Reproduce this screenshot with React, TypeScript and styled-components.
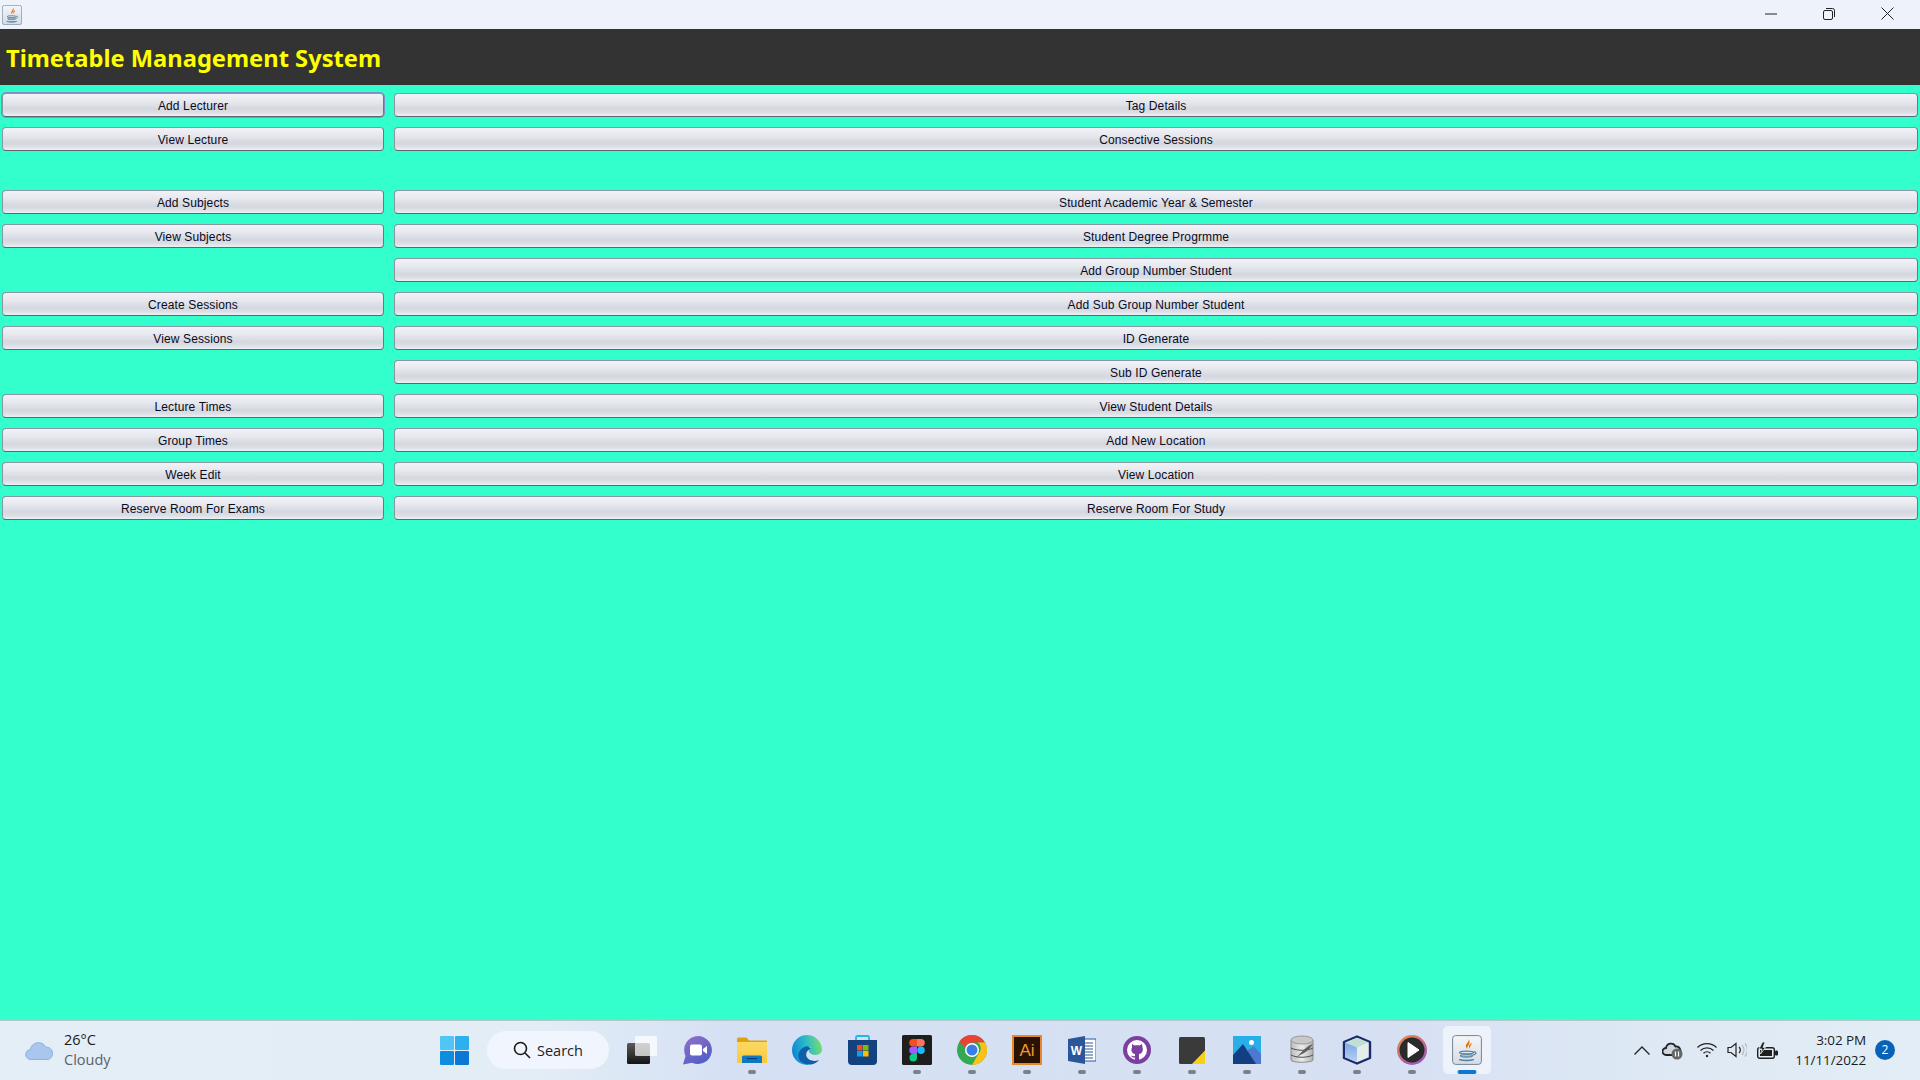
import React from 'react';
import styled, { createGlobalStyle } from 'styled-components';

const GlobalStyle = createGlobalStyle`
  html, body { margin: 0; padding: 0; height: 100%; overflow: hidden; }
  #root { height: 100%; }
`;

const Screen = styled.div`
  width: 1920px;
  height: 1080px;
  display: flex;
  flex-direction: column;
  background: #33ffcc;
  font-family: "Liberation Sans", Arial, sans-serif;
`;

const TitleBar = styled.div`
  height: 29px;
  flex: none;
  display: flex;
  align-items: center;
  justify-content: space-between;
  background: #eef3fb;
  padding: 0 3px 0 2px;
`;

const WindowControls = styled.div`
  display: flex;
  height: 100%;
`;

const WindowControl = styled.div`
  width: 58.5px;
  height: 100%;
  padding-bottom: 2px;
  box-sizing: border-box;
  display: flex;
  align-items: center;
  justify-content: center;
`;

const Header = styled.header`
  height: 56px;
  flex: none;
  box-sizing: border-box;
  display: flex;
  align-items: center;
  background: #333333;
  padding: 1px 0 0 6px;
`;

const HeaderTitle = styled.h1`
  margin: 0;
  font: 700 23.7px "Noto Sans", sans-serif;
  color: #ffff00;
`;

const Board = styled.main`
  flex: 1;
  display: grid;
  grid-template-columns: 382px 1fr;
  grid-auto-rows: max-content;
  column-gap: 10px;
  row-gap: 10px;
  padding: 8px 2px 0;
`;

const Spacer = styled.div`
  grid-column: 1 / -1;
  height: 19px;
`;

const ActionButton = styled.button<{ $focused?: boolean }>`
  height: 24px;
  padding: 2px 0 0;
  border: 1px solid #8b96a3;
  border-bottom-color: #5f6670;
  border-right-color: #6f7782;
  border-radius: 4px;
  background: linear-gradient(#f1f3f8 0%, #e6e8ee 35%, #d4d7de 68%, #dcdfe6 85%, #eef0f5 100%);
  font: 12px "Liberation Sans", Arial, sans-serif;
  letter-spacing: 0.12px;
  color: #0a0a1e;
  box-shadow: ${p => (p.$focused ? '0 0 0 1px #7f8fc8' : 'none')};
`;

const Taskbar = styled.footer`
  height: 60px;
  flex: none;
  display: flex;
  align-items: center;
  border-top: 1px solid #b7c6c9;
  padding-bottom: 1px;
  box-sizing: border-box;
  background: linear-gradient(90deg, #e3eef7 0%, #e2edf6 28%, #d6e0f4 38%, #d7e0f3 72%, #dde8f4 85%, #e2edf6 100%);
`;

const Weather = styled.div`
  width: 430px;
  flex: none;
  display: flex;
  align-items: center;
  gap: 9px;
  padding-left: 25px;
  box-sizing: border-box;
`;

const WeatherText = styled.div`
  font: 14.5px/20px "Open Sans", sans-serif;
  color: #1c1c1c;
`;

const WeatherNote = styled.div`
  color: #5c6168;
`;

const TaskIcons = styled.div`
  display: flex;
  align-items: center;
`;

const TaskIcon = styled.div<{ $active?: boolean }>`
  position: relative;
  width: 48px;
  height: 48px;
  margin-right: 7px;
  display: flex;
  align-items: center;
  justify-content: center;
  border-radius: 5px;
  background: ${p => (p.$active ? '#eef3fb' : 'transparent')};
`;

const RunDot = styled.span<{ $active?: boolean }>`
  position: absolute;
  bottom: 0;
  left: 50%;
  transform: translateX(-50%);
  width: ${p => (p.$active ? '19px' : '8px')};
  height: 4px;
  border-radius: 2px;
  background: ${p => (p.$active ? '#0a78d4' : '#7b8089')};
`;

const SearchBox = styled.div`
  width: 122px;
  height: 38px;
  margin: 0 9px 0 2px;
  box-sizing: border-box;
  display: flex;
  align-items: center;
  justify-content: center;
  gap: 6px;
  border-radius: 19px;
  background: #f1f5fd;
  font: 14.5px "Open Sans", sans-serif;
  color: #222;
`;

const Tray = styled.div`
  margin-left: auto;
  display: flex;
  align-items: center;
  padding-right: 25px;
`;

const TrayIcon = styled.div<{ $w: number }>`
  width: ${p => p.$w}px;
  display: flex;
  justify-content: center;
`;

const Clock = styled.div`
  width: 79px;
  text-align: right;
  font: 13.5px/20px "Open Sans", sans-serif;
  letter-spacing: -0.1px;
  color: #1c1c1c;
`;

const Badge = styled.div`
  width: 20px;
  height: 20px;
  margin-left: 9px;
  border-radius: 50%;
  background: #0a62b8;
  color: #fff;
  font: 12px/20px "Open Sans", sans-serif;
  text-align: center;
`;

const JavaIcon = ({ size, id }: { size: number; id: string }) => (
  <svg width={size} height={size} viewBox="0 0 30 30">
    <defs>
      <linearGradient id={id} x1="0" y1="0" x2="0" y2="1">
        <stop offset="0" stopColor="#f4f6f9" />
        <stop offset="1" stopColor="#d5dce4" />
      </linearGradient>
    </defs>
    <rect x="0.6" y="0.6" width="28.8" height="28.8" rx="3" fill={`url(#${id})`} stroke="#71859a" />
    <path d="M16.5 3c2 3.500-3.500 5.500-2.500 9 .3 1 1 1.800 1.500 2.500-1.800-3.500 4.500-5 1-11.500z" fill="#e76f00" />
    <path d="M20 8c-3.500 1.500-3.500 3.500-2.500 6-.2-2 1.500-3.500 2.500-6z" fill="#e76f00" />
    <ellipse cx="14.5" cy="17.5" rx="7" ry="1.400" fill="none" stroke="#5382a1" strokeWidth="1.300" />
    <ellipse cx="14.5" cy="20.8" rx="6" ry="1.200" fill="none" stroke="#5382a1" strokeWidth="1.300" />
    <path d="M7 24.500c4 1.800 11 1.800 15 0-3 .8-12 .8-15 0z" fill="#5382a1" stroke="#5382a1" />
    <path d="M21.500 17c3.500-.8 3.500 2.500-1 3.200" fill="none" stroke="#5382a1" strokeWidth="1.100" />
  </svg>
);

const StartIcon = () => (
  <svg width="29" height="29" viewBox="0 0 29 29">
    <rect x="0" y="0" width="14" height="14" rx="1" fill="#4fc6f5" />
    <rect x="15" y="0" width="14" height="14" rx="1" fill="#2fb0ee" />
    <rect x="0" y="15" width="14" height="14" rx="1" fill="#0f8ee0" />
    <rect x="15" y="15" width="14" height="14" rx="1" fill="#0a78d4" />
  </svg>
);

const TaskViewIcon = () => (
  <svg width="30" height="28" viewBox="0 0 30 28">
    <defs>
      <linearGradient id="tv" x1="0" y1="0" x2="0" y2="1">
        <stop offset="0" stopColor="#5a5a5a" />
        <stop offset="1" stopColor="#141414" />
      </linearGradient>
    </defs>
    <rect x="0" y="7" width="23" height="21" rx="1.5" fill="url(#tv)" />
    <rect x="8" y="0" width="22" height="20" rx="1.5" fill="#ffffff" opacity="0.72" />
  </svg>
);

const ChatIcon = () => (
  <svg width="30" height="30" viewBox="0 0 30 30">
    <defs>
      <linearGradient id="ch" x1="0.2" y1="0" x2="0.8" y2="1">
        <stop offset="0" stopColor="#8f6fc8" />
        <stop offset="1" stopColor="#4d5cc6" />
      </linearGradient>
    </defs>
    <path d="M16 1a14 14 0 1 1-6 26.700L1 29.500 3.500 21A14 14 0 0 1 16 1z" fill="url(#ch)" />
    <rect x="8" y="9.500" width="12" height="11" rx="2" fill="#fff" />
    <path d="M21 14l4-3v8l-4-3z" fill="#fff" />
  </svg>
);

const FolderIcon = () => (
  <svg width="30" height="26" viewBox="0 0 30 26">
    <defs>
      <linearGradient id="fo" x1="0" y1="0" x2="0" y2="1">
        <stop offset="0" stopColor="#fbd964" />
        <stop offset="1" stopColor="#fcc83a" />
      </linearGradient>
    </defs>
    <path d="M0 2a1.500 1.500 0 0 1 1.500-1.500h8L12 3.500h18V26H0z" fill="#dea20e" />
    <rect x="0" y="5" width="30" height="21" fill="url(#fo)" />
    <path d="M5 20a1.500 1.500 0 0 1 1.500-1.500h17a1.500 1.500 0 0 1 1.500 1.500v6H5z" fill="#0f78c6" />
    <rect x="10" y="21" width="10" height="1.200" fill="#083f6e" />
  </svg>
);

const EdgeIcon = () => (
  <svg width="30" height="30" viewBox="0 0 30 30">
    <defs>
      <linearGradient id="eg" x1="0" y1="0.5" x2="1" y2="0.3">
        <stop offset="0" stopColor="#0f86d6" />
        <stop offset="0.5" stopColor="#2cbcc8" />
        <stop offset="1" stopColor="#7ade6a" />
      </linearGradient>
    </defs>
    <circle cx="15" cy="15" r="15" fill="url(#eg)" />
    <path d="M30 16C28 21 20 21 17.500 17.500 16 15 17 13 19 12.500 15 11 9 13 9 20c0 5 4 8.500 8 10 6 0 10-3 13-8z" fill="#d7e0f3" />
    <path d="M14 11.500C8 13 5 19 7 24c2 4 7 6 12 5.500 3-.3 6-2 8-4.500-5 2-11 .5-12.500-3.500-1-3.500 1-6.500 4-8-1.500-1.500-3-2.500-4.500-2z" fill="#0c5fa8" />
  </svg>
);

const StoreIcon = () => (
  <svg width="29" height="30" viewBox="0 0 29 30">
    <path d="M8 5V2.500A1.500 1.500 0 0 1 9.500 1h10A1.500 1.500 0 0 1 21 2.500V5" fill="none" stroke="#29b2f0" strokeWidth="1.800" />
    <path d="M0 5h29v21a4 4 0 0 1-4 4H4a4 4 0 0 1-4-4z" fill="#14427e" />
    <rect x="9" y="10" width="5.500" height="5.500" fill="#f25022" />
    <rect x="15" y="10" width="5.500" height="5.500" fill="#7fba00" />
    <rect x="9" y="16" width="5.500" height="5.500" fill="#00a4ef" />
    <rect x="15" y="16" width="5.500" height="5.500" fill="#ffb900" />
  </svg>
);

const FigmaIcon = () => (
  <svg width="30" height="30" viewBox="0 0 30 30">
    <rect width="30" height="30" rx="1.500" fill="#1e1e1e" />
    <path d="M11 4h4v7.500h-4a3.750 3.750 0 0 1 0-7.500z" fill="#f24e1e" />
    <path d="M15 4h4a3.750 3.750 0 0 1 0 7.500h-4z" fill="#ff7262" />
    <path d="M11 11.500h4V19h-4a3.750 3.750 0 0 1 0-7.500z" fill="#a259ff" />
    <circle cx="19" cy="15.250" r="3.750" fill="#1abcfe" />
    <path d="M11 19h4v3.750a3.750 3.750 0 1 1-4-3.750z" fill="#0acf83" />
  </svg>
);

const ChromeIcon = () => (
  <svg width="30" height="30" viewBox="0 0 30 30">
    <circle cx="15" cy="15" r="15" fill="#34a853" />
    <path d="M15 0a15 15 0 0 1 13 7.500H15a7.500 7.500 0 0 0-7 5L2.500 6.500A15 15 0 0 1 15 0z" fill="#ea4335" />
    <path d="M28 7.500A15 15 0 0 1 15 30l6.500-11.300A7.500 7.500 0 0 0 21 7.500z" fill="#fbc116" />
    <circle cx="15" cy="15" r="7" fill="#fff" />
    <circle cx="15" cy="15" r="5.500" fill="#3b7de8" />
  </svg>
);

const IllustratorIcon = () => (
  <svg width="30" height="30" viewBox="0 0 30 30">
    <rect x="1" y="1" width="28" height="28" fill="#2a1200" stroke="#e8862a" strokeWidth="2" />
    <text x="15" y="21" textAnchor="middle" fontFamily="Liberation Sans" fontSize="17" fill="#f29a2e">Ai</text>
  </svg>
);

const WordIcon = () => (
  <svg width="28" height="28" viewBox="0 0 28 28">
    <rect x="13" y="3" width="15" height="22" fill="#fff" stroke="#2b5797" />
    <path d="M17 7h8M17 10h8M17 13h8M17 16h8M17 19h8M17 22h8" stroke="#2b5797" />
    <path d="M0 3L17 0v28L0 25z" fill="#2b579a" />
    <text x="8.5" y="19" textAnchor="middle" fontFamily="Liberation Sans" fontWeight="700" fontSize="12" fill="#fff">W</text>
  </svg>
);

const GithubIcon = () => (
  <svg width="28" height="28" viewBox="0 0 28 28">
    <circle cx="14" cy="14" r="12" fill="#fff" stroke="#7b3fa0" strokeWidth="4" />
    <path d="M9 8l2.500 1.500c1.500-.5 3.500-.5 5 0L19 8l.5 3.500c1 2.500 0 6-3.500 6.500v6h-4v-2.500c-2 .5-3.500-.5-4-2 1 .5 2 1 4 .5v-2c-3-.5-4.500-3.500-3-6.500z" fill="#7b3fa0" />
  </svg>
);

const NotesIcon = () => (
  <svg width="26" height="27" viewBox="0 0 26 27">
    <rect width="26" height="27" rx="1.500" fill="#3a3a3a" />
    <path d="M26 13.500V27H13z" fill="#f8d117" />
  </svg>
);

const PhotosIcon = () => (
  <svg width="28" height="28" viewBox="0 0 28 28">
    <rect width="28" height="28" fill="#29aee8" />
    <circle cx="18.500" cy="6.500" r="2.500" fill="#fff" />
    <path d="M15 28V14l6-3.500L28 18v10z" fill="#4d78cf" />
    <path d="M0 19L10 8l13 20H0z" fill="#123f82" />
  </svg>
);

const DatabaseIcon = () => (
  <svg width="24" height="30" viewBox="0 0 24 30">
    <defs>
      <linearGradient id="dbg" x1="0" y1="0" x2="1" y2="0">
        <stop offset="0" stopColor="#bdbdbd" />
        <stop offset="0.5" stopColor="#ececec" />
        <stop offset="1" stopColor="#b0b0b0" />
      </linearGradient>
    </defs>
    <path d="M1 5v20c0 3 22 3 22 0V5z" fill="url(#dbg)" stroke="#8c8c8c" />
    <ellipse cx="12" cy="5" rx="11" ry="4" fill="#c8c8c8" stroke="#9a9a9a" />
    <path d="M1 13c6 3 16 3 22 0M1 20c6 3 16 3 22 0" fill="none" stroke="#4f4f4f" />
    <path d="M5 24C10 19 16 11 23 9c-3 5-8 9-13 11z" fill="#5f5f5f" />
  </svg>
);

const CubeIcon = () => (
  <svg width="30" height="30" viewBox="0 0 30 30">
    <defs>
      <linearGradient id="cl" x1="0" y1="0" x2="0" y2="1">
        <stop offset="0" stopColor="#7fa8e6" />
        <stop offset="1" stopColor="#b8d0ee" />
      </linearGradient>
    </defs>
    <path d="M15 1.500L28 7v16L15 28.500 2 23V7z" fill="#e3eee9" stroke="#1a2a6c" strokeWidth="2.400" strokeLinejoin="round" />
    <path d="M3.200 7.600L15 2.800l11.800 4.800L15 12.500z" fill="#bfe0d2" />
    <path d="M3.200 7.600L15 12.500v14.800L3.200 22.300z" fill="url(#cl)" />
  </svg>
);

const PlayIcon = () => (
  <svg width="30" height="30" viewBox="0 0 30 30">
    <defs>
      <linearGradient id="pl" x1="0" y1="0" x2="0.6" y2="1">
        <stop offset="0" stopColor="#f58a3c" />
        <stop offset="1" stopColor="#9a58b8" />
      </linearGradient>
    </defs>
    <circle cx="15" cy="15" r="15" fill="url(#pl)" />
    <circle cx="15" cy="15" r="12.500" fill="#2a2a2a" />
    <path d="M11 7.500L22 15 11 22.500z" fill="#fff" stroke="#fff" strokeLinejoin="round" />
  </svg>
);

const leftColumn = [
  'Add Lecturer', 'View Lecture', null,
  'Add Subjects', 'View Subjects', '', 'Create Sessions', 'View Sessions', '',
  'Lecture Times', 'Group Times', 'Week Edit', 'Reserve Room For Exams',
];
const rightColumn = [
  'Tag Details', 'Consective Sessions', null,
  'Student Academic Year & Semester', 'Student Degree Progrmme', 'Add Group Number Student',
  'Add Sub Group Number Student', 'ID Generate', 'Sub ID Generate', 'View Student Details',
  'Add New Location', 'View Location', 'Reserve Room For Study',
];

const apps: { icon: React.ReactNode; running?: boolean }[] = [
  { icon: <FolderIcon />, running: true },
  { icon: <EdgeIcon /> },
  { icon: <StoreIcon /> },
  { icon: <FigmaIcon />, running: true },
  { icon: <ChromeIcon />, running: true },
  { icon: <IllustratorIcon />, running: true },
  { icon: <WordIcon />, running: true },
  { icon: <GithubIcon />, running: true },
  { icon: <NotesIcon />, running: true },
  { icon: <PhotosIcon />, running: true },
  { icon: <DatabaseIcon />, running: true },
  { icon: <CubeIcon />, running: true },
  { icon: <PlayIcon />, running: true },
];

const App = () => (
  <Screen>
    <GlobalStyle />
    <TitleBar>
      <JavaIcon size={20} id="javaSmall" />
      <WindowControls>
        <WindowControl>
          <svg width="12" height="12" viewBox="0 0 12 12"><path d="M0 6h12" stroke="#222" /></svg>
        </WindowControl>
        <WindowControl>
          <svg width="12" height="12" viewBox="0 0 12 12" fill="none" stroke="#222">
            <rect x="0.5" y="2.5" width="9" height="9" rx="1.5" />
            <path d="M3 .5h6.500a2 2 0 0 1 2 2V9" />
          </svg>
        </WindowControl>
        <WindowControl>
          <svg width="13" height="13" viewBox="0 0 13 13"><path d="M.5.5l12 12M12.500.5l-12 12" stroke="#222" /></svg>
        </WindowControl>
      </WindowControls>
    </TitleBar>
    <Header>
      <HeaderTitle>Timetable Management System</HeaderTitle>
    </Header>
    <Board>
      {leftColumn.map((label, i) =>
        label === null ? (
          <Spacer key={i} />
        ) : (
          <React.Fragment key={i}>
            {label ? <ActionButton $focused={i === 0}>{label}</ActionButton> : <div />}
            <ActionButton>{rightColumn[i]}</ActionButton>
          </React.Fragment>
        )
      )}
    </Board>
    <Taskbar>
      <Weather>
        <svg width="30" height="20" viewBox="0 0 30 20">
          <path d="M6 19.500a5 5 0 0 1-.5-10 8 8 0 0 1 15-2.500 6.500 6.500 0 0 1 3 12.500z" fill="#a9c6ee" stroke="#8fb0e4" />
        </svg>
        <WeatherText>
          26°C
          <WeatherNote>Cloudy</WeatherNote>
        </WeatherText>
      </Weather>
      <TaskIcons>
        <TaskIcon><StartIcon /></TaskIcon>
        <SearchBox>
          <svg width="18" height="18" viewBox="0 0 18 18" fill="none" stroke="#1a1a1a" strokeWidth="1.600">
            <circle cx="7.5" cy="7.5" r="6" />
            <path d="M12 12l5 5" />
          </svg>
          Search
        </SearchBox>
        <TaskIcon><TaskViewIcon /></TaskIcon>
        <TaskIcon><ChatIcon /></TaskIcon>
        {apps.map((app, i) => (
          <TaskIcon key={i}>
            {app.icon}
            {app.running && <RunDot />}
          </TaskIcon>
        ))}
        <TaskIcon $active>
          <JavaIcon size={30} id="javaTask" />
          <RunDot $active />
        </TaskIcon>
      </TaskIcons>
      <Tray>
        <TrayIcon $w={30}>
          <svg width="16" height="9" viewBox="0 0 16 9" fill="none" stroke="#222" strokeWidth="1.300"><path d="M.5 8.500L8 1l7.500 7.500" /></svg>
        </TrayIcon>
        <TrayIcon $w={30}>
          <svg width="21" height="19" viewBox="0 0 21 19">
            <path d="M4 14a3.500 3.500 0 0 1 0-7 5 5 0 0 1 9.500-1.500A4.500 4.500 0 0 1 16 14z" fill="#cfd6de" stroke="#222" strokeWidth="1.800" />
            <circle cx="15" cy="13" r="5.500" fill="#666" />
            <path d="M13.500 10.500v5M16.500 10.500v5" stroke="#fff" strokeWidth="1.200" />
          </svg>
        </TrayIcon>
        <TrayIcon $w={40}>
          <svg width="20" height="16" viewBox="0 0 20 16" fill="none" stroke="#222" strokeWidth="1.300">
            <path d="M.5 5.500a13.500 13.500 0 0 1 19 0M3.500 8.500a9.500 9.500 0 0 1 13 0M6.500 11.300a5 5 0 0 1 7 0" />
            <circle cx="10" cy="14" r="1.200" fill="#222" stroke="none" />
          </svg>
        </TrayIcon>
        <TrayIcon $w={20}>
          <svg width="20" height="16" viewBox="0 0 20 16" fill="none" stroke="#222" strokeWidth="1.200">
            <path d="M1 5.500h3L9 1.500v13l-5-4H1z" />
            <path d="M12 5a4 4 0 0 1 0 6" />
            <path d="M15 3a7.500 7.500 0 0 1 0 10M18 1.500a10 10 0 0 1 0 13" stroke="#b5bac2" />
          </svg>
        </TrayIcon>
        <TrayIcon $w={40}>
          <svg width="21" height="17" viewBox="0 0 21 17">
            <rect x="0.7" y="5.700" width="16.600" height="10.600" rx="2" fill="#e3edf6" stroke="#1f1f1f" strokeWidth="1.400" />
            <rect x="3" y="8" width="12" height="6" fill="#1f1f1f" />
            <rect x="18" y="8.500" width="3" height="5" rx="1" fill="#1f1f1f" />
            <path d="M5.500 0L2 7h3l-1.500 5 5-6.500H6L8 0z" fill="#1f1f1f" stroke="#e3edf6" strokeWidth="0.800" />
          </svg>
        </TrayIcon>
        <Clock>
          3:02 PM
          <br />
          11/11/2022
        </Clock>
        <Badge>2</Badge>
      </Tray>
    </Taskbar>
  </Screen>
);

export default App;
